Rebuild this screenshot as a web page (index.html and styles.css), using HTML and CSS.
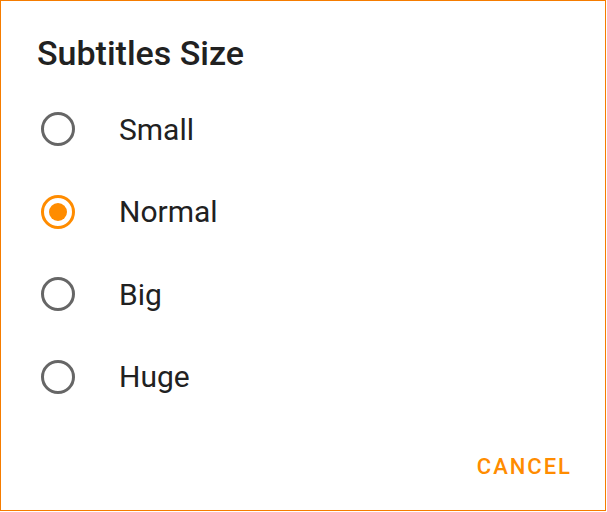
FILE: index.html
```html
<!DOCTYPE html>
<html>
<head>
<meta charset="utf-8">
<link rel="stylesheet" href="styles.css">
</head>
<body>
<div class="dialog">
  <h1 class="title">Subtitles Size</h1>
  <ul class="options">
    <li class="option"><span class="radio"></span><span class="label">Small</span></li>
    <li class="option"><span class="radio checked"></span><span class="label">Normal</span></li>
    <li class="option"><span class="radio"></span><span class="label">Big</span></li>
    <li class="option"><span class="radio"></span><span class="label">Huge</span></li>
  </ul>
  <div class="actions"><span class="btn">CANCEL</span></div>
</div>
</body>
</html>
```
FILE: styles.css
```css
html, body { margin: 0; padding: 0; background: #fff; }
.dialog {
  box-sizing: border-box;
  width: 606px;
  height: 511px;
  border: 1px solid #f57c00;
  font-family: Roboto, "Noto Sans", sans-serif;
  color: #212121;
  display: flex;
  flex-direction: column;
}
.title {
  margin: 0;
  padding: 32px 0 0 36px;
  font-size: 34px;
  font-weight: 500;
  line-height: 40px;
}
.options {
  list-style: none;
  margin: 15px 0 0 0;
  padding: 0;
}
.option {
  display: flex;
  align-items: center;
  height: 82.5px;
  padding-left: 40px;
}
.radio {
  box-sizing: border-box;
  width: 34px;
  height: 34px;
  border: 3px solid #666;
  border-radius: 50%;
  display: flex;
  align-items: center;
  justify-content: center;
  flex: none;
}
.radio.checked { border-color: #ff8c00; }
.radio.checked::after {
  content: "";
  width: 18px;
  height: 18px;
  border-radius: 50%;
  background: #ff8c00;
}
.label {
  margin-left: 44px;
  font-size: 30px;
}
.actions {
  margin-top: auto;
  display: flex;
  justify-content: flex-end;
  padding: 0 33px 31px 0;
}
.btn {
  color: #ff8c00;
  font-size: 22px;
  font-weight: 500;
  letter-spacing: 2px;
}
```
